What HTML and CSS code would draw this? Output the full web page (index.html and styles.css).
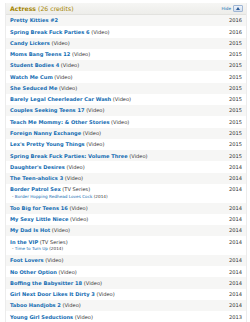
FILE: index.html
```html
<!DOCTYPE html>
<html>
<head>
<meta charset="utf-8">
<link rel="stylesheet" href="styles.css">
</head>
<body>
<div class="section">
  <div class="head">
    <span class="title"><b>Actress</b> (26 credits)</span>
    <span class="hide">Hide <span class="btn"><span class="tri"></span></span></span>
  </div>
  <div class="list">
    <div class="row odd"><span class="year">2016</span><a>Pretty Kitties #2</a></div>
    <div class="row even"><span class="year">2016</span><a>Spring Break Fuck Parties 6</a> (Video)</div>
    <div class="row odd"><span class="year">2015</span><a>Candy Lickers</a> (Video)</div>
    <div class="row even"><span class="year">2015</span><a>Moms Bang Teens 12</a> (Video)</div>
    <div class="row odd"><span class="year">2015</span><a>Student Bodies 4</a> (Video)</div>
    <div class="row even"><span class="year">2015</span><a>Watch Me Cum</a> (Video)</div>
    <div class="row odd"><span class="year">2015</span><a>She Seduced Me</a> (Video)</div>
    <div class="row even"><span class="year">2015</span><a>Barely Legal Cheerleader Car Wash</a> (Video)</div>
    <div class="row odd"><span class="year">2015</span><a>Couples Seeking Teens 17</a> (Video)</div>
    <div class="row even"><span class="year">2015</span><a>Teach Me Mommy: &amp; Other Stories</a> (Video)</div>
    <div class="row odd"><span class="year">2015</span><a>Foreign Nanny Exchange</a> (Video)</div>
    <div class="row even"><span class="year">2015</span><a>Lex's Pretty Young Things</a> (Video)</div>
    <div class="row odd"><span class="year">2015</span><a>Spring Break Fuck Parties: Volume Three</a> (Video)</div>
    <div class="row even"><span class="year">2014</span><a>Daughter's Desires</a> (Video)</div>
    <div class="row odd"><span class="year">2014</span><a>The Teen-aholics 3</a> (Video)</div>
    <div class="row even"><span class="year">2014</span><a>Border Patrol Sex</a> (TV Series)
      <div class="sub">- <span class="sublink">Border Hopping Redhead Loves Cock</span> (2014)</div></div>
    <div class="row odd"><span class="year">2014</span><a>Too Big for Teens 16</a> (Video)</div>
    <div class="row even"><span class="year">2014</span><a>My Sexy Little Niece</a> (Video)</div>
    <div class="row odd"><span class="year">2014</span><a>My Dad Is Hot</a> (Video)</div>
    <div class="row even"><span class="year">2014</span><a>In the VIP</a> (TV Series)
      <div class="sub">- <span class="sublink">Time to Turn Up</span> (2014)</div></div>
    <div class="row odd"><span class="year">2014</span><a>Foot Lovers</a> (Video)</div>
    <div class="row even"><span class="year">2014</span><a>No Other Option</a> (Video)</div>
    <div class="row odd"><span class="year">2014</span><a>Boffing the Babysitter 18</a> (Video)</div>
    <div class="row even"><span class="year">2014</span><a>Girl Next Door Likes It Dirty 3</a> (Video)</div>
    <div class="row odd"><span class="year">2014</span><a>Taboo Handjobs 2</a> (Video)</div>
    <div class="row even"><span class="year">2013</span><a>Young Girl Seductions</a> (Video)</div>
  </div>
</div>
</body>
</html>
```
FILE: styles.css
```css
html, body {
  margin: 0;
  padding: 0;
  background: #fff;
}
body {
  font-family: "DejaVu Sans", Verdana, sans-serif;
  color: #333;
  overflow: hidden;
}
.section {
  margin: 3px 3px 0 5px;
  border-left: 1px solid #ececec;
  border-right: 1px solid #ececec;
}
.head {
  height: 12px;
  box-sizing: border-box;
  padding: 0 3px 0 4px;
  display: flex;
  align-items: center;
  justify-content: space-between;
  background: linear-gradient(#f6f6f4, #ededea);
  border-bottom: 1px solid #e2e2df;
}
.title {
  font-size: 6.2px;
  color: #a58500;
}
.title b {
  font-weight: bold;
}
.hide {
  display: flex;
  align-items: center;
  gap: 2px;
  font-size: 4.2px;
  color: #136cb2;
}
.btn {
  width: 8px;
  height: 5px;
  border: 1px solid #9fb6d4;
  border-radius: 1px;
  background: linear-gradient(#eef3fa, #d3dfef);
  display: flex;
  align-items: center;
  justify-content: center;
}
.tri {
  width: 0;
  height: 0;
  border-left: 2.5px solid transparent;
  border-right: 2.5px solid transparent;
  border-bottom: 3px solid #2d5c96;
}
.row {
  padding: 2.35px 4px 2.35px 4px;
  font-size: 5.1px;
  line-height: 6.58px;
  color: #333;
}
.odd {
  background: #f6f6f5;
}
.even {
  background: #fff;
}
.row a {
  color: #136cb2;
  font-weight: bold;
  font-size: 5.1px;
}
.year {
  float: right;
}
.sub {
  font-size: 4.2px;
  line-height: 6.3px;
  margin-left: 2px;
  margin-top: 1px;
  color: #333;
}
.sublink {
  color: #136cb2;
}
```
